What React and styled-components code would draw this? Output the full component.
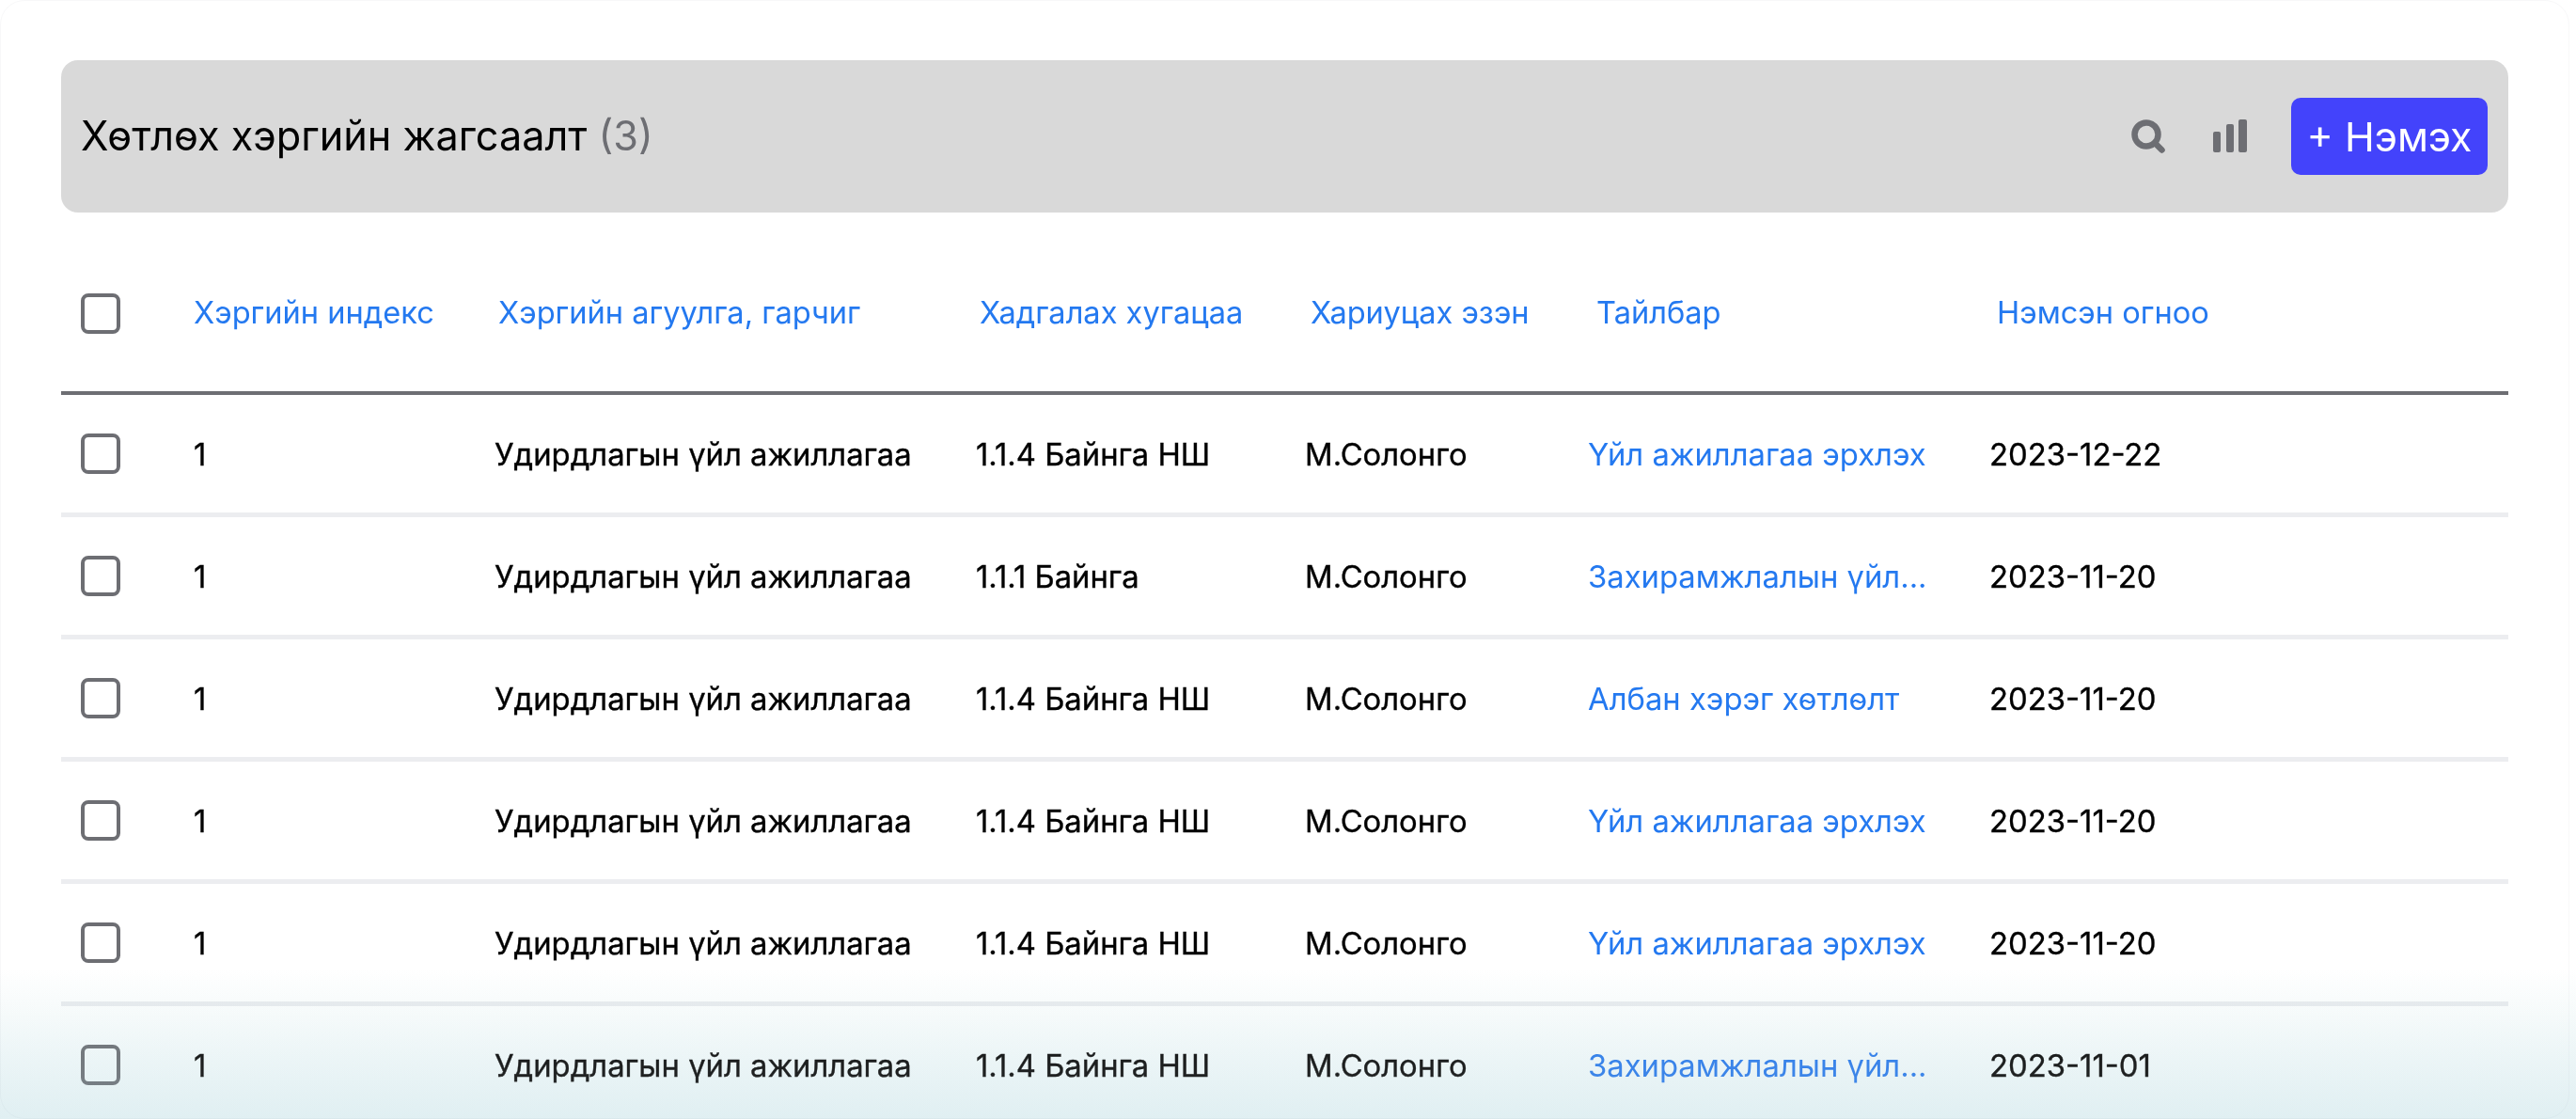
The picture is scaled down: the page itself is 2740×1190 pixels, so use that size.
import React from "react";
import styled, { createGlobalStyle } from "styled-components";

const Global = createGlobalStyle`
  html, body { margin: 0; padding: 0; height: 100%; background: #ffffff; }
  body { font-family: Inter, "Noto Sans", sans-serif; overflow: hidden; }
  * { box-sizing: border-box; }
`;

const Page = styled.div`
  position: relative;
  width: 2740px;
  height: 1190px;
  overflow: hidden;
  background: #ffffff;
`;

const Panel = styled.div`
  width: 2733px;
  height: 1190px;
  padding: 63px 64px 0 64px;
  border: 1px solid #f8f8f9;
  border-radius: 26px;
`;

const TopBar = styled.header`
  display: flex;
  align-items: center;
  height: 162px;
  padding: 0 22px 0 21px;
  background: #d9d9d9;
  border-radius: 18px;
`;

const Title = styled.h1`
  flex: 1;
  margin: 0 0 3px;
  font-size: 43.2px;
  font-weight: 400;
  color: #000000;
`;

const Count = styled.span`
  color: #6d6e73;
`;

const Tools = styled.div`
  display: flex;
  align-items: center;
  gap: 51px;
  margin-right: 47px;
`;

const ToolIcon = styled.svg`
  display: block;
  width: 36px;
  height: 36px;
`;

const AddButton = styled.button`
  width: 209px;
  height: 82px;
  padding: 0;
  border: none;
  border-radius: 10px;
  background: #4343fb;
  color: #ffffff;
  font-family: inherit;
  font-size: 42.8px;
  font-weight: 400;
`;

const Grid = styled.div`
  display: grid;
  grid-template-columns: ${(p) => p.$cols};
  align-items: center;
  padding-left: 21px;
`;

const HeadRow = styled(Grid)`
  height: 166px;
  margin-top: 24px;
  color: #2479f0;
  font-size: 32.6px;
`;

const HeadRule = styled.div`
  height: 4px;
  background: #6d6e73;
`;

const BodyRow = styled(Grid)`
  height: 130px;
  border-bottom: 5px solid #ecedf0;
  color: #000000;
  font-size: 32.8px;
  font-weight: 400;
`;

const Box = styled.span`
  display: block;
  width: 42px;
  height: 43px;
  border: 4px solid #6d6e73;
  border-radius: 8px;
`;

const Label = styled.span`
  margin-bottom: 2px;
  white-space: nowrap;
`;

const Link = styled.span`
  color: #2479f0;
  white-space: nowrap;
`;

const Cell = styled.span`
  white-space: nowrap;
  -webkit-text-stroke: 0.35px #000000;
`;

const Fade = styled.div`
  position: absolute;
  left: 0;
  right: 0;
  bottom: 0;
  height: 160px;
  pointer-events: none;
  mix-blend-mode: multiply;
  background: linear-gradient(to bottom, #ffffff 0%, #f7fbfb 30%, #e0eff2 100%);
`;

const Veil = styled.div`
  position: absolute;
  left: 0;
  right: 0;
  bottom: 0;
  height: 160px;
  pointer-events: none;
  background: linear-gradient(to bottom, rgba(224, 239, 242, 0), rgba(224, 239, 242, 0.2));
`;

const HEAD_COLS = "120px 324px 512px 352px 304px 426px 1fr";
const ROW_COLS = "120px 320px 512px 350px 301px 427px 1fr";

const rows = [
  ["1.1.4 Байнга НШ", "Үйл ажиллагаа эрхлэх", "2023-12-22"],
  ["1.1.1 Байнга", "Захирамжлалын үйл...", "2023-11-20"],
  ["1.1.4 Байнга НШ", "Албан хэрэг хөтлөлт", "2023-11-20"],
  ["1.1.4 Байнга НШ", "Үйл ажиллагаа эрхлэх", "2023-11-20"],
  ["1.1.4 Байнга НШ", "Үйл ажиллагаа эрхлэх", "2023-11-20"],
  ["1.1.4 Байнга НШ", "Захирамжлалын үйл...", "2023-11-01"],
];

const SearchIcon = () => (
  <ToolIcon viewBox="0 0 36 36" fill="none">
    <circle cx="16" cy="16" r="12.5" stroke="#6d6e73" strokeWidth="6.5" />
    <path d="M25 25L32.5 32.5" stroke="#6d6e73" strokeWidth="6.5" strokeLinecap="round" />
  </ToolIcon>
);

const BarsIcon = () => (
  <ToolIcon viewBox="0 0 36 36" fill="#6d6e73">
    <rect x="0" y="13" width="8" height="22" rx="2" />
    <rect x="14" y="5" width="8" height="30" rx="2" />
    <rect x="27" y="0" width="9" height="35" rx="2" />
  </ToolIcon>
);

export default function App() {
  return (
    <Page>
      <Global />
      <Panel>
        <TopBar>
          <Title>
            Хөтлөх хэргийн жагсаалт <Count>(3)</Count>
          </Title>
          <Tools>
            <SearchIcon />
            <BarsIcon />
          </Tools>
          <AddButton>+ Нэмэх</AddButton>
        </TopBar>
        <HeadRow $cols={HEAD_COLS}>
          <Box />
          <Label>Хэргийн индекс</Label>
          <Label>Хэргийн агуулга, гарчиг</Label>
          <Label>Хадгалах хугацаа</Label>
          <Label>Хариуцах эзэн</Label>
          <Label>Тайлбар</Label>
          <Label>Нэмсэн огноо</Label>
        </HeadRow>
        <HeadRule />
        {rows.map((r, i) => (
          <BodyRow key={i} $cols={ROW_COLS}>
            <Box />
            <Cell>1</Cell>
            <Cell>Удирдлагын үйл ажиллагаа</Cell>
            <Cell>{r[0]}</Cell>
            <Cell>М.Солонго</Cell>
            <Link>{r[1]}</Link>
            <Cell>{r[2]}</Cell>
          </BodyRow>
        ))}
      </Panel>
      <Fade />
      <Veil />
    </Page>
  );
}
